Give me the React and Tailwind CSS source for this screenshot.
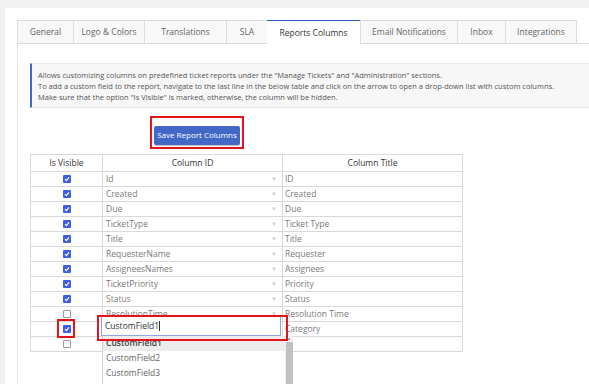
import React from 'react';

const tabs = [
  { label: 'General', w: 'w-[56px]' },
  { label: 'Logo & Colors', w: 'w-[71px]' },
  { label: 'Translations', w: 'w-[82px]' },
  { label: 'SLA', w: 'w-[41px]' },
  { label: 'Reports Columns', w: 'w-[93px]', active: true },
  { label: 'Email Notifications', w: 'w-[97px]' },
  { label: 'Inbox', w: 'w-[48px]' },
  { label: 'Integrations', w: 'w-[72px]' },
];

const rows = [
  { on: true, id: 'Id', title: 'ID' },
  { on: true, id: 'Created', title: 'Created' },
  { on: true, id: 'Due', title: 'Due' },
  { on: true, id: 'TicketType', title: 'Ticket Type' },
  { on: true, id: 'Title', title: 'Title' },
  { on: true, id: 'RequesterName', title: 'Requester' },
  { on: true, id: 'AssigneesNames', title: 'Assignees' },
  { on: true, id: 'TicketPriority', title: 'Priority' },
  { on: true, id: 'Status', title: 'Status' },
  { on: false, id: 'ResolutionTime', title: 'Resolution Time' },
  { on: true, id: '', title: 'Category' },
  { on: false, id: '', title: '' },
];

function Check({ on }) {
  if (!on) {
    return <span className="block w-[8px] h-[8px] border border-[#9a9a9a] rounded-[1px] bg-white" />;
  }
  return (
    <span className="flex items-center justify-center w-[8px] h-[8px] rounded-[1px] bg-[#3f5ee8]">
      <svg width="6" height="6" viewBox="0 0 6 6">
        <path d="M1 3.2 L2.4 4.6 L5 1.4" stroke="white" strokeWidth="1.2" fill="none" />
      </svg>
    </span>
  );
}

export default function App() {
  return (
    <div className="w-[589px] h-[384px] overflow-hidden bg-[#f1f1f1] pt-[8px] pl-[5px] font-['Open_Sans',sans-serif]">
      <div className="bg-white h-full pt-[12px] pl-[12px] relative">
        {/* tabs */}
        <div className="flex h-[24px] border-b border-[#dcdcdc]">
          {tabs.map((t) =>
            t.active ? (
              <div
                key={t.label}
                className={`${t.w} -mb-px h-[25px] flex items-center justify-center bg-white border-t border-t-[#3558c8] text-[8.5px] text-[#333]`}
              >
                {t.label}
              </div>
            ) : (
              <div
                key={t.label}
                className={`${t.w} flex items-center justify-center bg-[#f8f8f8] border border-r-0 border-[#dcdcdc] border-b-0 last:border-r text-[8.5px] text-[#666]`}
              >
                {t.label}
              </div>
            )
          )}
        </div>

        {/* content */}
        <div className="border-l border-[#e2e2e2] h-full pl-[12px] pt-[19px]">
          <div className="h-[45px] bg-[#f7f7f7] border-y border-[#e9e9e9] border-l-2 border-l-[#4169c8] pl-[6px] pt-[6px] text-[7.5px] leading-[11px] text-[#555]">
            <p>Allows customizing columns on predefined ticket reports under the "Manage Tickets" and "Administration" sections.</p>
            <p>To add a custom field to the report, navigate to the last line in the below table and click on the arrow to open a drop-down list with custom columns.</p>
            <p>Make sure that the option "Is Visible" is marked, otherwise, the column will be hidden.</p>
          </div>

          <div className="h-[46px] pt-[8px] pl-[120px]">
            <div className="inline-block border-2 border-[#e3141b] p-[2px]">
              <button className="w-[86px] h-[19px] rounded-[2px] bg-[#4267c6] text-white text-[8px] shadow-[0_1px_1px_rgba(0,0,0,0.25)]">
                Save Report Columns
              </button>
            </div>
          </div>

          {/* table */}
          <div className="relative w-[433px]">
            <div className="border border-[#d9d9d9]">
              <div className="grid grid-cols-[72px_180px_1fr] h-[16px] text-[8.5px] text-[#333]">
                <div className="flex items-center justify-center border-r border-[#d9d9d9]">Is Visible</div>
                <div className="flex items-center justify-center border-r border-[#d9d9d9]">Column ID</div>
                <div className="flex items-center justify-center">Column Title</div>
              </div>
              {rows.map((r, i) => (
                <div key={i} className="grid grid-cols-[72px_180px_1fr] h-[15px] border-t border-[#d9d9d9] text-[8.5px] text-[#7a7a7a]">
                  <div className="flex items-center justify-center border-r border-[#d9d9d9]">
                    <Check on={r.on} />
                  </div>
                  <div className="flex items-center justify-between pl-[3px] pr-[5px] border-r border-[#d9d9d9]">
                    <span>{r.id}</span>
                    {i < 10 && <span className="text-[6px] text-[#d0d0d0]">▼</span>}
                  </div>
                  <div className="flex items-center pl-[2px]">{r.title}</div>
                </div>
              ))}
            </div>

            {/* focused editor */}
            <div className="absolute left-[71px] top-[162px] w-[180px] h-[20px] bg-white border border-[#8fa3f0] flex items-center pl-[3px] text-[8.5px] text-[#333]">
              CustomField1<span className="w-px h-[10px] bg-[#333]" />
            </div>

            {/* dropdown */}
            <div className="absolute left-[72px] top-[182px] w-[191px] h-[60px] bg-white border-l border-[#cfcfcf] flex">
              <div className="flex-1 text-[8.5px] text-[#666]">
                <div className="h-[15px] flex items-center pl-[3px] bg-[#ececec] text-[#444] font-semibold">CustomField1</div>
                <div className="h-[15px] flex items-center pl-[3px]">CustomField2</div>
                <div className="h-[15px] flex items-center pl-[3px]">CustomField3</div>
              </div>
              <div className="w-[8px] bg-[#f0f0f0] flex flex-col items-center">
                <span className="text-[4px] leading-[6px] text-[#888]">▲</span>
                <div className="w-[7px] flex-1 bg-[#c1c1c1]" />
              </div>
            </div>

            {/* annotation boxes */}
            <div className="absolute left-[27px] top-[165px] w-[18px] h-[19px] border-2 border-[#e3141b]" />
            <div className="absolute left-[67px] top-[161px] w-[191px] h-[26px] border-2 border-[#e3141b]" />
          </div>
        </div>
      </div>
    </div>
  );
}
